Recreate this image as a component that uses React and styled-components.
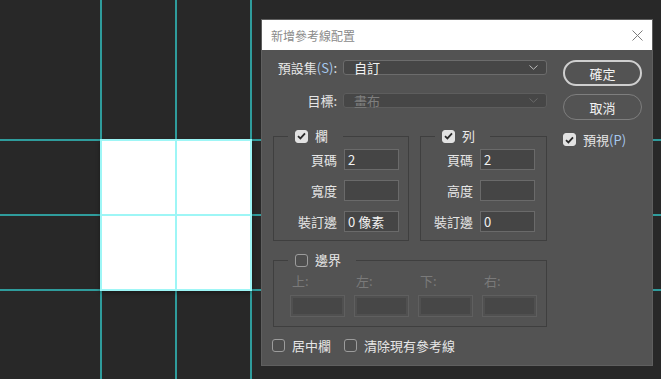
import React from 'react'
import styled, { createGlobalStyle } from 'styled-components'

const GlobalStyle = createGlobalStyle`
  html, body {
    margin: 0;
    padding: 0;
    background: #282828;
  }
  body {
    font-family: "Noto Sans CJK TC", "Noto Sans", sans-serif;
  }
`

const Check = ({ checked }) => (
  <Box checked={checked}>
    {checked && (
      <svg width='9' height='8' viewBox='0 0 9 8'>
        <path d='M1 4.2 L3.4 6.4 L8 1.4' fill='none' stroke='#2b2b2b' strokeWidth='1.8' />
      </svg>
    )}
  </Box>
)

const Chevron = ({ dim }) => (
  <svg width='9' height='5' viewBox='0 0 9 5'>
    <path d='M0.5 0.5 L4.5 4.2 L8.5 0.5' fill='none' stroke={dim ? '#6a6a6a' : '#bdbdbd'} strokeWidth='1' />
  </svg>
)

const App = () => (
  <Desktop>
    <GlobalStyle />
    <Guide vertical pos={100} />
    <Guide vertical pos={175} />
    <Guide vertical pos={250} />
    <Guide pos={139} />
    <Guide pos={214} />
    <Guide pos={289} />
    <Artboard>
      <ArtLine vertical />
      <ArtLine />
    </Artboard>

    <Dialog>
      <TitleBar>
        <span>新增參考線配置</span>
        <svg width='11' height='11' viewBox='0 0 11 11'>
          <path d='M0.5 0.5 L10.5 10.5 M10.5 0.5 L0.5 10.5' stroke='#7c7c7c' strokeWidth='1' />
        </svg>
      </TitleBar>
      <Body>
        <MainCol>
          <FormRow>
            <Label>預設集<Key>(S)</Key>:</Label>
            <Select>
              <span>自訂</span>
              <Chevron />
            </Select>
          </FormRow>
          <FormRow top={18}>
            <Label>目標:</Label>
            <Select disabled>
              <span>畫布</span>
              <Chevron dim />
            </Select>
          </FormRow>

          <GroupRow>
            <Group width={136}>
              <Legend>
                <Check checked />
                <span>欄</span>
              </Legend>
              <FieldGrid right={9}>
                <FieldLabel>頁碼</FieldLabel>
                <Field>2</Field>
                <FieldLabel>寬度</FieldLabel>
                <Field />
                <FieldLabel>裝訂邊</FieldLabel>
                <Field>0 像素</Field>
              </FieldGrid>
            </Group>
            <Group width={127}>
              <Legend>
                <Check checked />
                <span>列</span>
              </Legend>
              <FieldGrid right={11}>
                <FieldLabel>頁碼</FieldLabel>
                <Field>2</Field>
                <FieldLabel>高度</FieldLabel>
                <Field />
                <FieldLabel>裝訂邊</FieldLabel>
                <Field>0</Field>
              </FieldGrid>
            </Group>
          </GroupRow>

          <Group width={274} top={12}>
            <Legend>
              <Check />
              <span>邊界</span>
            </Legend>
            <MarginGrid>
              <SideLabel>上:</SideLabel>
              <SideLabel>左:</SideLabel>
              <SideLabel>下:</SideLabel>
              <SideLabel>右:</SideLabel>
              <SideField />
              <SideField />
              <SideField />
              <SideField />
            </MarginGrid>
          </Group>

          <OptionRow>
            <Option>
              <Check />
              <span>居中欄</span>
            </Option>
            <Option>
              <Check />
              <span>清除現有參考線</span>
            </Option>
          </OptionRow>
        </MainCol>

        <SideCol>
          <Button primary>確定</Button>
          <Button>取消</Button>
          <Option top={4}>
            <Check checked />
            <span>預視<Key>(P)</Key></span>
          </Option>
        </SideCol>
      </Body>
    </Dialog>
  </Desktop>
)

const Desktop = styled.div`
  position: relative;
  width: 661px;
  height: 379px;
  overflow: hidden;
  background: #282828;
`

const Guide = styled.div`
  position: absolute;
  background: #2f9c9c;
  ${p => p.vertical
    ? `left: ${p.pos}px; top: 0; width: 2px; height: 100%;`
    : `top: ${p.pos}px; left: 0; height: 2px; width: 100%;`}
`

const Artboard = styled.div`
  position: absolute;
  left: 100px;
  top: 139px;
  width: 152px;
  height: 152px;
  box-sizing: border-box;
  background: #fff;
  border: 2px solid #9ef6f6;
  box-shadow: 0 2px 4px rgba(0, 0, 0, 0.35);
`

const ArtLine = styled.div`
  position: absolute;
  background: #9ef6f6;
  ${p => p.vertical
    ? 'left: 73px; top: 0; width: 2px; height: 100%;'
    : 'top: 73px; left: 0; height: 2px; width: 100%;'}
`

const Dialog = styled.div`
  position: absolute;
  left: 261px;
  top: 19px;
  width: 392px;
  height: 347px;
  box-sizing: border-box;
  border: 1px solid #5f5f5f;
  background: #535353;
  display: flex;
  flex-direction: column;
  color: #e6e6e6;
  font-size: 13px;
`

const TitleBar = styled.div`
  height: 30px;
  flex: none;
  background: #fff;
  display: flex;
  align-items: center;
  justify-content: space-between;
  padding: 0 9px 0 9px;
  font-size: 12px;
  color: #8a8a8a;
`

const Body = styled.div`
  display: flex;
  gap: 16px;
  padding: 10px 0 0 11px;
`

const MainCol = styled.div`
  width: 274px;
  display: flex;
  flex-direction: column;
`

const SideCol = styled.div`
  width: 79px;
  display: flex;
  flex-direction: column;
  gap: 8px;
`

const FormRow = styled.div`
  display: flex;
  align-items: center;
  gap: 6px;
  height: 15px;
  margin-top: ${p => p.top || 0}px;
`

const Label = styled.div`
  width: 64px;
  text-align: right;
  line-height: 15px;
  white-space: nowrap;
`

const Key = styled.span`
  color: #a6c8ee;
`

const Select = styled.div`
  width: 204px;
  height: 15px;
  box-sizing: border-box;
  border: 1px solid ${p => p.disabled ? '#5d5d5d' : '#6c6c6c'};
  border-radius: 3px;
  background: #464646;
  display: flex;
  align-items: center;
  justify-content: space-between;
  padding: 0 8px 0 10px;
  line-height: 13px;
  color: ${p => p.disabled ? '#7e7e7e' : '#f2f2f2'};
`

const GroupRow = styled.div`
  display: flex;
  gap: 11px;
  margin-top: 21px;
`

const Group = styled.fieldset`
  margin: ${p => p.top || 0}px 0 0 0;
  padding: 0;
  width: ${p => p.width}px;
  box-sizing: border-box;
  min-width: 0;
  border: 1px solid #3f3f3f;
`

const Legend = styled.legend`
  margin-left: 14px;
  padding: 0 15px 0 7px;
  height: 14px;
  display: flex;
  align-items: center;
  gap: 7px;
  line-height: 14px;
  color: #e8e8e8;
`

const Box = styled.span`
  width: 13px;
  height: 13px;
  flex: none;
  box-sizing: border-box;
  border-radius: 3px;
  display: inline-flex;
  align-items: center;
  justify-content: center;
  background: ${p => p.checked ? '#e2e2e2' : '#4e4e4e'};
  border: 1px solid ${p => p.checked ? '#e2e2e2' : '#9c9c9c'};
`

const FieldGrid = styled.div`
  display: grid;
  grid-template-columns: auto 55px;
  justify-content: end;
  align-items: center;
  column-gap: 7px;
  row-gap: 10px;
  padding: 6px ${p => p.right}px 8px 0;
`

const FieldLabel = styled.div`
  text-align: right;
  white-space: nowrap;
`

const Field = styled.div`
  height: 21px;
  box-sizing: border-box;
  border: 1px solid #6a6a6a;
  background: #454545;
  padding-left: 3px;
  line-height: 19px;
  color: #f2f2f2;
  white-space: nowrap;
`

const MarginGrid = styled.div`
  display: grid;
  grid-template-columns: repeat(4, 55px);
  grid-template-rows: 14px 22px;
  column-gap: 9px;
  row-gap: 7px;
  padding: 7px 8px 9px 16px;
`

const SideLabel = styled.div`
  padding-left: 2px;
  line-height: 14px;
  color: #7a7a7a;
`

const SideField = styled.div`
  box-sizing: border-box;
  border: 1px solid #5f5f5f;
  background: #474747;
  box-shadow: inset 0 0 0 2px #505050;
`

const OptionRow = styled.div`
  display: flex;
  gap: 13px;
  margin: 11px 0 0 -1px;
`

const Option = styled.div`
  display: flex;
  align-items: center;
  gap: 7px;
  height: 15px;
  line-height: 15px;
  margin-top: ${p => p.top || 0}px;
  white-space: nowrap;
`

const Button = styled.div`
  height: 26px;
  box-sizing: border-box;
  border-radius: 13px;
  border: ${p => p.primary ? '2px solid #cfcfcf' : '1px solid #7e7e7e'};
  display: flex;
  align-items: center;
  justify-content: center;
  color: #f2f2f2;
`

export default App
